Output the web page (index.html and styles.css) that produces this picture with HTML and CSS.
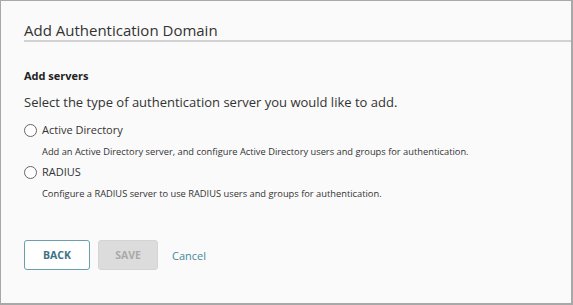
FILE: index.html
```html
<!DOCTYPE html>
<html>
<head>
    <meta charset="UTF-8">
    <title>Add Authentication Domain</title>
    <link rel="stylesheet" href="styles.css">
</head>
<body>
    <div class="panel">
        <h1 class="title">Add Authentication Domain</h1>

        <h2 class="section">Add servers</h2>
        <p class="intro">Select the type of authentication server you would like to add.</p>

        <div class="option">
            <label class="option-label"><span class="radio"></span>Active Directory</label>
            <p class="option-desc">Add an Active Directory server, and configure Active Directory users and groups for authentication.</p>
        </div>
        <div class="option">
            <label class="option-label"><span class="radio"></span>RADIUS</label>
            <p class="option-desc">Configure a RADIUS server to use RADIUS users and groups for authentication.</p>
        </div>

        <div class="actions">
            <button type="button" class="btn btn-back">BACK</button>
            <button type="button" class="btn btn-save" disabled>SAVE</button>
            <a href="#" class="cancel">Cancel</a>
        </div>
    </div>
</body>
</html>
```

FILE: styles.css
```css
html, body {
    margin: 0;
    padding: 0;
    height: 100%;
}
body {
    font-family: "Open Sans", Arial, sans-serif;
    color: #333;
    background-color: #fafafa;
}
.panel {
    box-sizing: border-box;
    height: 305px;
    border: 1px solid #a8a8a8;
    border-right-width: 2px;
    border-bottom-width: 2px;
    padding: 0 0 0 23px;
}
.title {
    margin: 0;
    padding: 20px 0 1px 0;
    font-size: 15px;
    font-weight: normal;
    line-height: 18px;
    border-bottom: 2px solid #d2d2d2;
}
.section {
    margin: 25px 0 0 0;
    font-size: 11px;
    font-weight: bold;
    line-height: 18px;
    color: #222;
}
.intro {
    margin: 8px 0 0 0;
    font-size: 13px;
    line-height: 18px;
}
.option {
    margin-top: 10px;
}
.option + .option {
    margin-top: 4px;
}
.option-label {
    display: flex;
    align-items: center;
    font-size: 11px;
    line-height: 18px;
}
.radio {
    box-sizing: border-box;
    width: 13px;
    height: 13px;
    border: 1px solid #666;
    border-radius: 50%;
    background-color: #fff;
    margin: 0 5px 0 0;
}
.option-desc {
    margin: 6px 0 0 18px;
    font-size: 9.3px;
    line-height: 14px;
}
.actions {
    display: flex;
    align-items: center;
    margin-top: 39px;
}
.btn {
    box-sizing: border-box;
    height: 30px;
    border-radius: 3px;
    font-family: "Open Sans", Arial, sans-serif;
    font-size: 10.5px;
    font-weight: bold;
    padding: 0;
}
.btn-back {
    width: 66px;
    background-color: #fff;
    border: 1px solid #6a9fae;
    color: #3d7284;
}
.btn-save {
    width: 60px;
    margin-left: 8px;
    background-color: #dcdcdc;
    border: 1px solid #d4d4d4;
    color: #a9a9a9;
}
.cancel {
    margin-left: 14px;
    font-size: 11px;
    color: #45879a;
    text-decoration: none;
}
```
